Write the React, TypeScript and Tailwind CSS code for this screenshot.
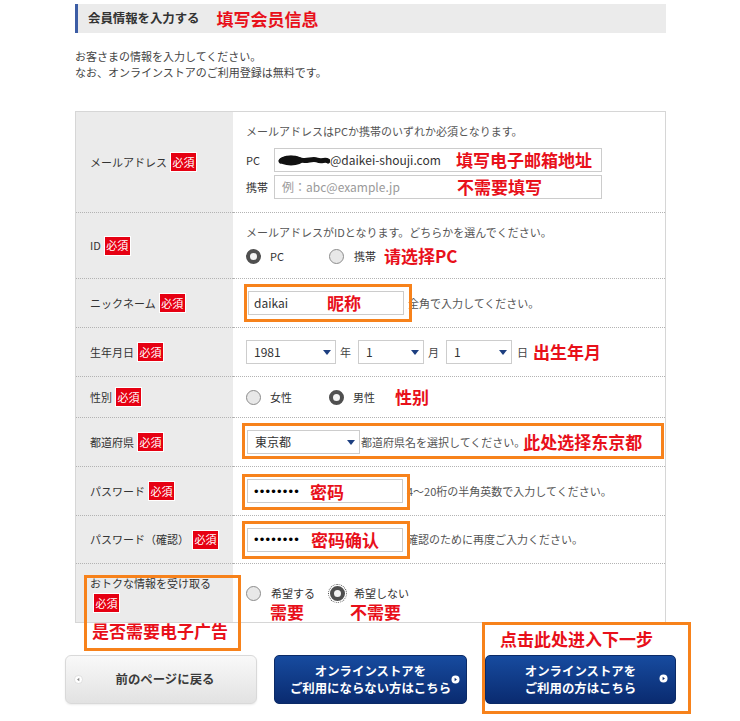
import React from "react";

const RED = "font-['Noto_Sans_CJK_SC',sans-serif] font-bold text-[17px] leading-[20px] text-[#e8101a] whitespace-nowrap";

function Badge({ block = false }: { block?: boolean }) {
  return (
    <span
      className={`${block ? "flex" : "inline-flex"} items-center justify-center w-[27px] h-[20px] ml-[3px] bg-[#e60012] border border-white text-white text-[11px] leading-none shrink-0`}
    >
      必須
    </span>
  );
}

function Radio({ checked = false, focus = false }: { checked?: boolean; focus?: boolean }) {
  if (checked) {
    return (
      <span
        className={`block w-[15px] h-[15px] rounded-full border-[4px] border-[#4f4f4f] bg-[#f3f3f3] shrink-0 ${
          focus ? "outline-1 outline-dotted outline-[#555] outline-offset-1" : ""
        }`}
      />
    );
  }
  return <span className="block w-[15px] h-[15px] rounded-full border border-[#8c8c8c] bg-[#e8e8e8] shrink-0" />;
}

function Select({ value, className }: { value: string; className: string }) {
  return (
    <div
      className={`relative h-[24px] border border-[#cdcdcd] bg-white flex items-center pl-[7px] text-[12px] text-[#333] shrink-0 ${className}`}
    >
      {value}
      <svg className="absolute right-[4px] top-[9px]" width="8" height="5" viewBox="0 0 8 5">
        <path d="M0 0H8L4 5Z" fill="#1d3f80" />
      </svg>
    </div>
  );
}

function Row({
  h,
  label,
  right,
  last = false,
  leftClass = "",
  leftExtra,
}: {
  h: string;
  label: React.ReactNode;
  right: React.ReactNode;
  last?: boolean;
  leftClass?: string;
  leftExtra?: React.ReactNode;
}) {
  const border = last ? "" : "border-b border-dotted border-[#b3b3b3]";
  return (
    <div className={`flex ${h}`}>
      <div className={`relative w-[157px] shrink-0 bg-[#ebebeb] pl-[14px] ${border} ${leftClass}`}>
        {label}
        {leftExtra}
      </div>
      <div className={`relative flex-1 ${border}`}>{right}</div>
    </div>
  );
}

function Blob() {
  return (
    <svg width="53" height="14" viewBox="0 0 53 14" className="shrink-0">
      <ellipse cx="14" cy="7.5" rx="12" ry="5" fill="#111" />
      <path
        d="M4 8 C 10 4, 18 5, 24 7 C 30 9, 35 5, 40 7 C 45 9, 48 6, 51 8"
        stroke="#111"
        strokeWidth="5"
        fill="none"
        strokeLinecap="round"
      />
    </svg>
  );
}

function Orange({ className }: { className: string }) {
  return <div className={`absolute z-10 border-[3px] border-[#f7821b] pointer-events-none ${className}`} />;
}

function Dots() {
  return (
    <span className="font-['Liberation_Sans',sans-serif] text-[13px] leading-none tracking-[1.2px] text-black">
      ••••••••
    </span>
  );
}

export default function App() {
  return (
    <div className="relative w-[740px] h-[721px] bg-white overflow-hidden font-['Noto_Sans_CJK_JP',sans-serif] text-[#333]">
      <div className="ml-[75px] w-[591px] pt-[4px]">
        {/* header */}
        <div className="h-[29px] bg-[#ebebeb] border-l-[3px] border-[#3c5da5] flex items-center pl-[10px]">
          <span className="text-[12.4px] font-bold leading-none text-[#333]">会員情報を入力する</span>
          <span className={`${RED} ml-[17px]`}>填写会员信息</span>
        </div>

        {/* intro */}
        <div className="mt-[15px] text-[11px] leading-[16px] text-[#444]">
          <p>お客さまの情報を入力してください。</p>
          <p>なお、オンラインストアのご利用登録は無料です。</p>
        </div>

        {/* table */}
        <div className="mt-[31px] border border-[#d6d6d6] text-[11px]">
          <Row
            h="h-[101px]"
            leftClass="flex items-center"
            label={
              <>
                <span>メールアドレス</span>
                <Badge />
              </>
            }
            right={
              <div className="pl-[13px] pt-[11px]">
                <p className="leading-[16px] text-[#555]">メールアドレスはPCか携帯のいずれか必須となります。</p>
                <div className="mt-[9px] flex items-center">
                  <span className="w-[28px] text-[#333]">PC</span>
                  <div className="w-[328px] h-[24px] border border-[#cccccc] bg-white flex items-center pl-[2px] text-[12px] text-[#333]">
                    <Blob />
                    <span>@daikei-shouji.com</span>
                  </div>
                </div>
                <div className="mt-[3px] flex items-center">
                  <span className="w-[28px] text-[#333]">携帯</span>
                  <div className="w-[328px] h-[24px] border border-[#cccccc] bg-white flex items-center pl-[7px] text-[12px] text-[#9a9a9a]">
                    例：abc@example.jp
                  </div>
                </div>
                <span className={`${RED} absolute z-10 left-[223px] top-[38px]`}>填写电子邮箱地址</span>
                <span className={`${RED} absolute z-10 left-[224px] top-[65px]`}>不需要填写</span>
              </div>
            }
          />
          <Row
            h="h-[66px]"
            leftClass="flex items-center"
            label={
              <>
                <span>ID</span>
                <Badge />
              </>
            }
            right={
              <div className="pl-[13px] pt-[11px]">
                <p className="leading-[16px] text-[#555]">メールアドレスがIDとなります。どちらかを選んでください。</p>
                <div className="mt-[8px] h-[16px] flex items-center">
                  <div className="w-[83px] flex items-center">
                    <Radio checked />
                    <span className="ml-[9px]">PC</span>
                  </div>
                  <div className="flex items-center">
                    <Radio />
                    <span className="ml-[10px]">携帯</span>
                  </div>
                  <span className={`${RED} ml-[8px]`}>请选择PC</span>
                </div>
              </div>
            }
          />
          <Row
            h="h-[49px]"
            leftClass="flex items-center"
            label={
              <>
                <span>ニックネーム</span>
                <Badge />
              </>
            }
            right={
              <div className="h-full flex items-center pl-[15px]">
                <div className="w-[156px] h-[24px] border border-[#cccccc] bg-white flex items-center pl-[5px] text-[12px] text-[#333] shrink-0">
                  daikai
                </div>
                <span className="ml-[4px] text-[#555] whitespace-nowrap">全角で入力してください。</span>
                <Orange className="left-[11px] top-[5px] w-[168px] h-[38px]" />
                <span className={`${RED} absolute z-10 left-[94px] top-[14px]`}>昵称</span>
              </div>
            }
          />
          <Row
            h="h-[49px]"
            leftClass="flex items-center"
            label={
              <>
                <span>生年月日</span>
                <Badge />
              </>
            }
            right={
              <div className="h-full flex items-center pl-[13px] text-[#444]">
                <Select value="1981" className="w-[90px]" />
                <span className="ml-[4px]">年</span>
                <Select value="1" className="w-[66px] ml-[7px]" />
                <span className="ml-[4px]">月</span>
                <Select value="1" className="w-[66px] ml-[7px]" />
                <span className="ml-[5px]">日</span>
                <span className={`${RED} ml-[5px]`}>出生年月</span>
              </div>
            }
          />
          <Row
            h="h-[41px]"
            leftClass="flex items-center"
            label={
              <>
                <span>性別</span>
                <Badge />
              </>
            }
            right={
              <div className="h-full flex items-center pl-[13px]">
                <div className="w-[83px] flex items-center">
                  <Radio />
                  <span className="ml-[9px]">女性</span>
                </div>
                <div className="flex items-center">
                  <Radio checked />
                  <span className="ml-[9px]">男性</span>
                </div>
                <span className={`${RED} ml-[20px]`}>性别</span>
              </div>
            }
          />
          <Row
            h="h-[49px]"
            leftClass="flex items-center"
            label={
              <>
                <span>都道府県</span>
                <Badge />
              </>
            }
            right={
              <div className="h-full flex items-center pl-[14px]">
                <Select value="東京都" className="w-[113px] text-[11px]" />
                <span className="ml-[1px] text-[#555] whitespace-nowrap">都道府県名を選択してください。</span>
                <span className={`${RED} ml-[-2px]`}>此处选择东京都</span>
                <Orange className="left-[9px] top-[5px] w-[422px] h-[36px]" />
              </div>
            }
          />
          <Row
            h="h-[49px]"
            leftClass="flex items-center"
            label={
              <>
                <span>パスワード</span>
                <Badge />
              </>
            }
            right={
              <div className="h-full flex items-center pl-[14px]">
                <div className="w-[156px] h-[24px] border border-[#cccccc] bg-white flex items-center pl-[6px] shrink-0">
                  <Dots />
                </div>
                <span className="ml-[4px] text-[#555] whitespace-nowrap">4～20桁の半角英数で入力してください。</span>
                <Orange className="left-[9px] top-[7px] w-[168px] h-[36px]" />
                <span className={`${RED} absolute z-10 left-[77px] top-[15px]`}>密码</span>
              </div>
            }
          />
          <Row
            h="h-[48px]"
            leftClass="flex items-center"
            label={
              <>
                <span>パスワード（確認）</span>
                <Badge />
              </>
            }
            right={
              <div className="h-full flex items-center pl-[14px]">
                <div className="w-[156px] h-[24px] border border-[#cccccc] bg-white flex items-center pl-[6px] shrink-0">
                  <Dots />
                </div>
                <span className="ml-[4px] text-[#555] whitespace-nowrap">確認のために再度ご入力ください。</span>
                <Orange className="left-[9px] top-[5px] w-[168px] h-[38px]" />
                <span className={`${RED} absolute z-10 left-[78px] top-[14px]`}>密码确认</span>
              </div>
            }
          />
          <Row
            h="h-[58px]"
            last
            leftClass="pt-[11px]"
            label={
              <>
                <p className="leading-[16px]">おトクな情報を受け取る</p>
                <div className="mt-[2px]">
                  <Badge block />
                </div>
              </>
            }
            leftExtra={
              <>
                <Orange className="left-[8px] top-[11px] w-[157px] h-[76px]" />
                <span className={`${RED} absolute z-10 left-[16px] top-[57px]`}>是否需要电子广告</span>
              </>
            }
            right={
              <div className="h-full flex items-center pl-[13px]">
                <div className="w-[84px] flex items-center">
                  <Radio />
                  <span className="ml-[10px]">希望する</span>
                </div>
                <div className="flex items-center">
                  <Radio checked focus />
                  <span className="ml-[9px]">希望しない</span>
                </div>
                <span className={`${RED} absolute z-10 left-[37px] top-[38px]`}>需要</span>
                <span className={`${RED} absolute z-10 left-[117px] top-[38px]`}>不需要</span>
              </div>
            }
          />
        </div>
      </div>

      {/* buttons */}
      <div className="mt-[32px] ml-[65px] flex">
        <div className="relative w-[192px] h-[49px] rounded-[6px] border border-[#d9d9d9] bg-linear-to-b from-[#f9f9f9] to-[#e2e2e2] shadow-[0_1px_2px_rgba(0,0,0,0.08)] flex items-center justify-center">
          <svg className="absolute left-[8px] top-[19px]" width="9" height="9" viewBox="0 0 9 9">
            <circle cx="4.5" cy="4.5" r="4" fill="#fff" stroke="#d0d0d0" strokeWidth="0.6" />
            <path d="M5.3 2.8 L3 4.5 L5.3 6.2 Z" fill="#888" />
          </svg>
          <span className="pl-[8px] text-[12.4px] font-bold text-[#3a3a3a]">前のページに戻る</span>
        </div>
        <div className="relative ml-[17px] w-[193px] h-[49px] rounded-[5px] border border-[#0b2a66] bg-linear-to-b from-[#174b9f] to-[#0a2b70] flex items-center justify-center">
          <div className="text-center text-white text-[12.4px] font-bold leading-[17px]">
            <p>オンラインストアを</p>
            <p>ご利用にならない方はこちら</p>
          </div>
          <svg className="absolute right-[6px] top-[19px]" width="9" height="9" viewBox="0 0 9 9">
            <circle cx="4.5" cy="4.5" r="4" fill="#fff" />
            <path d="M3.6 2.8 L5.9 4.5 L3.6 6.2 Z" fill="#0b2b70" />
          </svg>
        </div>
        <div className="relative ml-[18px] w-[191px] h-[49px]">
          <div className="w-full h-full rounded-[5px] border border-[#0b2a66] bg-linear-to-b from-[#174b9f] to-[#0a2b70] flex items-center justify-center">
            <div className="text-center text-white text-[12.4px] font-bold leading-[17px]">
              <p>オンラインストアを</p>
              <p>ご利用の方はこちら</p>
            </div>
            <svg className="absolute right-[8px] top-[19px]" width="9" height="9" viewBox="0 0 9 9">
              <circle cx="4.5" cy="4.5" r="4" fill="#fff" />
              <path d="M3.6 2.8 L5.9 4.5 L3.6 6.2 Z" fill="#0b2b70" />
            </svg>
          </div>
          <Orange className="left-[-3px] top-[-33px] w-[209px] h-[92px]" />
          <span className={`${RED} absolute z-10 left-[15px] top-[-26px]`}>点击此处进入下一步</span>
        </div>
      </div>
    </div>
  );
}
